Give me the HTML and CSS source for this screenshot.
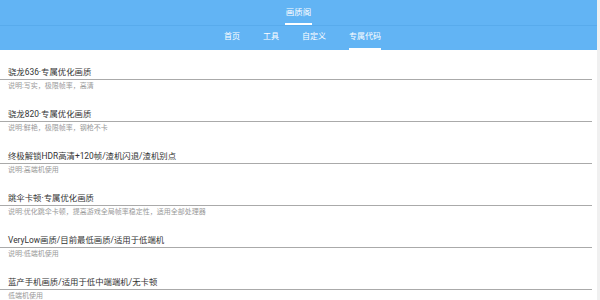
FILE: index.html
```html
<!DOCTYPE html>
<html lang="zh-CN">
<head>
  <meta charset="UTF-8" />
  <title>画质阁</title>
  <link rel="stylesheet" href="styles.css">
</head>
<body>
  <div class="app">
    <header class="appbar">
      <div class="appbar-title"><span class="title-tab">画质阁</span></div>
      <nav class="tabs">
        <a class="tab">首页</a>
        <a class="tab">工具</a>
        <a class="tab">自定义</a>
        <a class="tab active">专属代码</a>
      </nav>
    </header>

    <ul class="list">
      <li class="item">
        <div class="item-title">骁龙636·专属优化画质</div>
        <div class="item-desc">说明:写实，极限帧率，高清</div>
      </li>
      <li class="item">
        <div class="item-title">骁龙820·专属优化画质</div>
        <div class="item-desc">说明:鲜艳，极限帧率，钢枪不卡</div>
      </li>
      <li class="item">
        <div class="item-title">终极解锁HDR高清+120帧/渣机闪退/渣机别点</div>
        <div class="item-desc">说明:高端机使用</div>
      </li>
      <li class="item">
        <div class="item-title">跳伞卡顿·专属优化画质</div>
        <div class="item-desc">说明:优化跳伞卡顿，提高游戏全局帧率稳定性，适用全部处理器</div>
      </li>
      <li class="item">
        <div class="item-title">VeryLow画质/目前最低画质/适用于低端机</div>
        <div class="item-desc">说明:低端机使用</div>
      </li>
      <li class="item">
        <div class="item-title">蓝产手机画质/适用于低中端端机/无卡顿</div>
        <div class="item-desc">低端机使用</div>
      </li>
    </ul>
  </div>
</body>
</html>
```

FILE: styles.css
```css
* {
  box-sizing: border-box;
}
body {
  margin: 0;
  font-family: Roboto, "Noto Sans CJK SC", sans-serif;
  background: #ffffff;
  overflow: hidden;
}
.app {
  width: 600px;
  height: 300px;
  border-right: 3px solid #f0f0f0;
}
.appbar {
  background-color: #62b4f4;
  color: #ffffff;
}
.appbar-title {
  height: 26px;
  display: flex;
  justify-content: center;
  border-bottom: 1px solid #58abec;
}
.title-tab {
  font-size: 8.5px;
  line-height: 24px;
  padding: 0 1px;
  border-bottom: 2px solid #ffffff;
}
.tabs {
  height: 24px;
  display: flex;
  justify-content: center;
  gap: 23px;
  padding-left: 8px;
}
.tab {
  font-size: 8px;
  line-height: 22px;
  border-bottom: 2px solid transparent;
}
.tab.active {
  border-bottom-color: #ffffff;
}
.list {
  list-style: none;
  margin: 0;
  padding: 0 5px 0 0;
}
.item {
  padding-top: 15px;
}
.item-title {
  padding-left: 8px;
  font-size: 8.4px;
  line-height: 14px;
  color: #333333;
  border-bottom: 1.5px solid #aaaaaa;
}
.item-desc {
  padding-left: 8px;
  font-size: 7px;
  line-height: 12px;
  color: #999999;
}
```
